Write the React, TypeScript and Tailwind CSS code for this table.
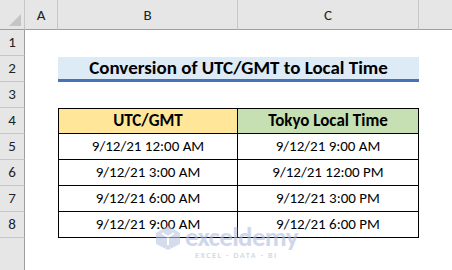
const rows = [
  ["9/12/21 12:00 AM", "9/12/21 9:00 AM"],
  ["9/12/21 3:00 AM", "9/12/21 12:00 PM"],
  ["9/12/21 6:00 AM", "9/12/21 3:00 PM"],
  ["9/12/21 9:00 AM", "9/12/21 6:00 PM"],
];

function RowHead({ n }: { n: number }) {
  return (
    <div className="flex items-center justify-center border-b border-r border-[#c6c6c6] border-r-[#9e9e9e] bg-[#e6e6e6] text-[15px] text-[#222]">
      {n}
    </div>
  );
}

export default function App() {
  return (
    <div
      className="relative h-[270px] w-[452px] overflow-hidden bg-white text-black"
      style={{ fontFamily: "Carlito, Lato, 'Open Sans', sans-serif" }}
    >
      <div className="grid h-full grid-cols-[25px_33px_180px_181px_1fr] grid-rows-[30px_repeat(8,26px)_1fr]">
        {/* column headers */}
        <div className="relative border-b border-r border-b-[#9e9e9e] border-r-[#c6c6c6] bg-[#e6e6e6]">
          <div className="absolute bottom-[3px] right-[3px] h-0 w-0 border-b-[12px] border-l-[12px] border-b-[#c4c4c4] border-l-transparent" />
        </div>
        <div className="flex items-end justify-center border-b border-r border-b-[#9e9e9e] border-r-[#c6c6c6] bg-[#e6e6e6] pb-[3px] text-[15px] text-[#222]">
          A
        </div>
        <div className="flex items-end justify-center border-b border-r border-b-[#9e9e9e] border-r-[#c6c6c6] bg-[#e6e6e6] pb-[3px] text-[15px] text-[#222]">
          B
        </div>
        <div className="flex items-end justify-center border-b border-r border-b-[#9e9e9e] border-r-[#c6c6c6] bg-[#e6e6e6] pb-[3px] text-[15px] text-[#222]">
          C
        </div>
        <div className="border-b border-b-[#9e9e9e] bg-[#e6e6e6]" />

        {/* row 1 */}
        <RowHead n={1} />
        <div className="col-span-4" />

        {/* row 2 */}
        <RowHead n={2} />
        <div />
        <div className="col-span-2 mt-px flex items-center justify-center border-b-[3px] border-[#4a70b8] bg-[#ddebf7] text-[19px] font-bold">
          Conversion of UTC/GMT to Local Time
        </div>
        <div />

        {/* row 3 */}
        <RowHead n={3} />
        <div className="col-span-4" />

        {/* row 4 */}
        <RowHead n={4} />
        <div />
        <div className="flex items-center justify-center border border-black bg-[#ffe699] text-[17px] font-bold">
          UTC/GMT
        </div>
        <div className="flex items-center justify-center border-y border-r border-black bg-[#c6e0b4] text-[17px] font-bold">
          Tokyo Local Time
        </div>
        <div />

        {rows.map(([a, b], i) => (
          <div key={i} className="contents">
            <RowHead n={i + 5} />
            <div />
            <div className="flex items-center justify-center border-x border-b border-black text-[15px]">
              {a}
            </div>
            <div className="flex items-center justify-center border-b border-r border-black text-[15px]">
              {b}
            </div>
            <div />
          </div>
        ))}

        {/* filler */}
        <div className="border-r border-[#9e9e9e] bg-[#e6e6e6]" />
        <div className="col-span-4" />
      </div>

      {/* watermark */}
      <div className="pointer-events-none absolute left-[155px] top-[225px] flex items-start gap-1 opacity-60">
        <svg width="26" height="26" viewBox="0 0 26 26">
          <path d="M13 1 L25 8 L25 19 L13 25 L1 19 L1 8 Z" fill="#b9c6e4" />
          <path d="M7 8 L13 12 L19 8 M13 12 L13 20" stroke="#fff" strokeWidth="2" fill="none" />
        </svg>
        <div className="flex flex-col leading-none">
          <span className="text-[27px] font-bold leading-[24px] tracking-tight text-[#aebde0]">exceldemy</span>
          <span className="mt-[2px] pl-[10px] text-[8px] font-bold tracking-[0.2em] text-[#b5bfd4]">
            EXCEL - DATA - BI
          </span>
        </div>
      </div>
    </div>
  );
}
